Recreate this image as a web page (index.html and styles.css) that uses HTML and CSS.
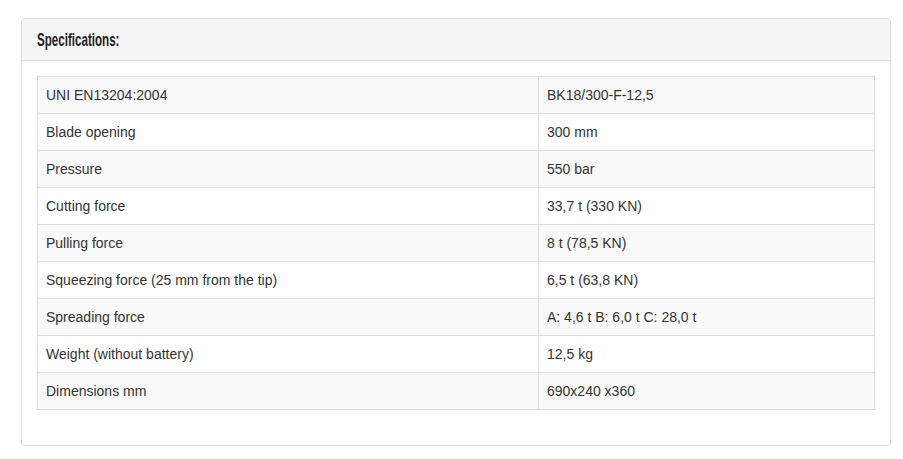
FILE: index.html
```html
<!DOCTYPE html>
<html>
<head>
<meta charset="utf-8">
<link rel="stylesheet" href="styles.css">
</head>
<body>
<div class="panel">
  <div class="panel-heading"><h3 class="panel-title">Specifications:</h3></div>
  <div class="panel-body">
    <table class="specs">
      <tr><td class="key">UNI EN13204:2004</td><td>BK18/300-F-12,5</td></tr>
      <tr><td class="key">Blade opening</td><td>300 mm</td></tr>
      <tr><td class="key">Pressure</td><td>550 bar</td></tr>
      <tr><td class="key">Cutting force</td><td>33,7 t (330 KN)</td></tr>
      <tr><td class="key">Pulling force</td><td>8 t (78,5 KN)</td></tr>
      <tr><td class="key">Squeezing force (25 mm from the tip)</td><td>6,5 t (63,8 KN)</td></tr>
      <tr><td class="key">Spreading force</td><td>A: 4,6 t B: 6,0 t C: 28,0 t</td></tr>
      <tr><td class="key">Weight (without battery)</td><td>12,5 kg</td></tr>
      <tr><td class="key">Dimensions mm</td><td>690x240 x360</td></tr>
    </table>
  </div>
</div>
</body>
</html>
```
FILE: styles.css
```css
html, body {
  margin: 0;
  padding: 0;
  background: #fff;
}
body {
  padding: 18px 12px 0 21px;
  font-family: "Liberation Sans", Arial, sans-serif;
  font-size: 14px;
  line-height: 20px;
  color: #333;
}
.panel {
  width: 868px;
  border: 1px solid #ddd;
  border-radius: 4px;
  box-shadow: 0 1px 1px rgba(0,0,0,0.05);
  background: #fff;
}
.panel-heading {
  background: #f5f5f5;
  border-bottom: 1px solid #ddd;
  border-radius: 3px 3px 0 0;
  padding: 10px 15px;
  height: 21px;
}
.panel-title {
  display: inline-block;
  margin: 0;
  font-family: "Liberation Sans", Arial, sans-serif;
  font-weight: bold;
  font-size: 19px;
  line-height: 22px;
  color: #222;
  transform: scaleX(0.61);
  transform-origin: left center;
}
.panel-body {
  padding: 15px 15px 15px;
}
.specs {
  width: 100%;
  border-collapse: collapse;
  margin-bottom: 20px;
  border: 1px solid #ddd;
}
.specs td {
  border: 1px solid #ddd;
  padding: 8px 8px;
  vertical-align: top;
}
.specs td.key {
  width: 484px;
}
.specs tr:nth-child(odd) td {
  background: #f9f9f9;
}
```
